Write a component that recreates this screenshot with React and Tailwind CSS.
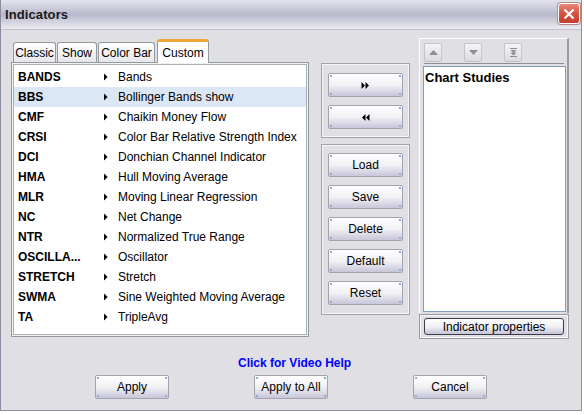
import React from 'react';

const rows = [
  ['BANDS', 'Bands'],
  ['BBS', 'Bollinger Bands show'],
  ['CMF', 'Chaikin Money Flow'],
  ['CRSI', 'Color Bar Relative Strength Index'],
  ['DCI', 'Donchian Channel Indicator'],
  ['HMA', 'Hull Moving Average'],
  ['MLR', 'Moving Linear Regression'],
  ['NC', 'Net Change'],
  ['NTR', 'Normalized True Range'],
  ['OSCILLA...', 'Oscillator'],
  ['STRETCH', 'Stretch'],
  ['SWMA', 'Sine Weighted Moving Average'],
  ['TA', 'TripleAvg'],
];

const font = { fontFamily: '"Liberation Sans", Arial, sans-serif' };

function XpButton({ children, className = '' }) {
  return (
    <div className={`relative flex items-center justify-center border border-[#a3a3ad] rounded-[2px] bg-gradient-to-b from-white via-[#f1f1f5] to-[#c8c6d9] text-[12px] text-black ${className}`}>
      <span className="absolute left-px top-px w-[2px] h-[2px] bg-[#8cb0d8]" />
      <span className="absolute right-px top-px w-[2px] h-[2px] bg-[#8cb0d8]" />
      <span className="absolute left-px bottom-px w-[2px] h-[2px] bg-[#8cb0d8]" />
      <span className="absolute right-px bottom-px w-[2px] h-[2px] bg-[#8cb0d8]" />
      {children}
    </div>
  );
}

function Tri() {
  return (
    <svg width="6" height="8" viewBox="0 0 6 8" className="shrink-0">
      <path d="M1.5 1 L5 4 L1.5 7 Z" fill="#c8c8c8" />
      <path d="M1 0.5 L4.5 4 L1 7.5 Z" fill="#000" />
    </svg>
  );
}

function Tab({ label, active }) {
  if (active) {
    return (
      <div className="relative z-10 -mb-px h-[24px] w-[52px] flex items-center justify-center rounded-t-[3px] border-x border-[#919b9c] border-t-[3px] border-t-[#f0a637] bg-white text-[12px] text-black">
        {label}
      </div>
    );
  }
  return (
    <div className="h-[20px] flex items-center justify-center rounded-t-[3px] border border-b-0 border-[#919b9c] bg-gradient-to-b from-white to-[#e6e6ec] text-[12px] text-black">
      {label}
    </div>
  );
}

function SmallBtn({ children }) {
  return (
    <div className="w-[18px] h-[19px] flex items-center justify-center rounded-[2px] border border-[#c4c3c8] bg-gradient-to-b from-[#f4f4f4] to-[#dcdbe0]">
      {children}
    </div>
  );
}

export default function App() {
  return (
    <div className="w-[584px] h-[415px] bg-white" style={font}>
      <div className="w-[582px] h-[411px] flex flex-col border-x border-b border-[#8d8ca0] bg-[#e0dfe3]">
        {/* title bar */}
        <div className="h-[30px] shrink-0 flex items-center justify-between pl-[4px] pr-px bg-gradient-to-b from-[#e4e4ec] via-[#b9b9cc] to-[#ecebf2] border-b border-[#c2c1cc]">
          <span className="text-[13px] font-bold text-[#1a1a1a] tracking-[0.1px]">Indicators</span>
          <div className="w-[22px] h-[21px] mb-[2px] flex items-center justify-center rounded-[3px] border border-white bg-gradient-to-b from-[#e88a7c] via-[#d4513f] to-[#c2402e] shadow-[0_0_0_1px_#b88]">
            <svg width="12" height="12" viewBox="0 0 12 12">
              <path d="M1.5 1.5 L10.5 10.5 M10.5 1.5 L1.5 10.5" stroke="#fff" strokeWidth="2.2" />
            </svg>
          </div>
        </div>

        {/* main row */}
        <div className="flex pt-[8px] pl-[10px]">
          {/* left column */}
          <div className="w-[298px] mt-px flex flex-col">
            <div className="h-[23px] flex items-end gap-px pl-[2px]">
              <div className="w-[43px]"><Tab label="Classic" /></div>
              <div className="w-[40px]"><Tab label="Show" /></div>
              <div className="w-[57px] mr-px"><Tab label="Color Bar" /></div>
              <Tab label="Custom" active />
            </div>
            <div className="h-[275px] border border-[#919b9c] bg-[#f2f2f2] p-px">
              <div className="h-full border border-[#aab0b8] bg-white pt-[2px]">
                {rows.map(([code, name], i) => (
                  <div key={code} className={`h-[20px] flex items-center pl-[4px] ${i === 1 ? 'bg-[#dce7f5]' : ''}`}>
                    <span className="w-[85px] shrink-0 text-[12px] font-bold text-black">{code}</span>
                    <Tri />
                    <span className="ml-[9px] text-[12px] text-black">{name}</span>
                  </div>
                ))}
              </div>
            </div>
          </div>

          {/* middle column */}
          <div className="w-[89px] ml-[12px] mt-[25px] flex flex-col gap-[6px]">
            <div className="h-[75px] border border-[#a3a2a8] shadow-[inset_0_0_0_1px_#f6f6f8] flex flex-col gap-[8px] px-[6px] pt-[9px]">
              <XpButton className="h-[24px]">
                <svg width="9" height="7" viewBox="0 0 9 7">
                  <path d="M0.5 0 L4 3.5 L0.5 7 Z M4.5 0 L8 3.5 L4.5 7 Z" fill="#000" />
                </svg>
              </XpButton>
              <XpButton className="h-[24px]">
                <svg width="9" height="7" viewBox="0 0 9 7">
                  <path d="M4.5 0 L1 3.5 L4.5 7 Z M8.5 0 L5 3.5 L8.5 7 Z" fill="#000" />
                </svg>
              </XpButton>
            </div>
            <div className="h-[171px] border border-[#a3a2a8] shadow-[inset_0_0_0_1px_#f6f6f8] flex flex-col gap-[8px] px-[6px] pt-[8px]">
              {['Load', 'Save', 'Delete', 'Default', 'Reset'].map((t) => (
                <XpButton key={t} className="h-[24px]">{t}</XpButton>
              ))}
            </div>
          </div>

          {/* right column */}
          <div className="w-[150px] ml-[9px] flex flex-col">
            <div className="h-[275px] border-t border-l border-white border-r-2 border-r-[#9a99a0] pl-[4px] pr-px pt-[4px] flex flex-col">
              <div className="flex gap-[22px]">
                <SmallBtn>
                  <svg width="9" height="5" viewBox="0 0 9 5"><path d="M0 5 L4.5 0 L9 5 Z" fill="#8d8d93" /></svg>
                </SmallBtn>
                <SmallBtn>
                  <svg width="9" height="5" viewBox="0 0 9 5"><path d="M0 0 L4.5 5 L9 0 Z" fill="#8d8d93" /></svg>
                </SmallBtn>
                <SmallBtn>
                  <svg width="7" height="9" viewBox="0 0 7 9">
                    <path d="M0 0.5 H7 M0 8.5 H7" stroke="#8d8d93" strokeWidth="1" />
                    <path d="M0.5 2 L3.5 5 L6.5 2 Z M0.5 4.5 L3.5 7.5 L6.5 4.5 Z" fill="#8d8d93" />
                  </svg>
                </SmallBtn>
              </div>
              <div className="mt-px h-px bg-[#8f8e96] mr-[2px]" />
              <div className="mt-[2px] h-[246px] -ml-px border border-[#7f9db9] bg-white px-px pt-[3px]">
                <div className="text-[13px] leading-[15px] font-bold text-black">Chart Studies</div>
              </div>
            </div>
            <div className="mt-[1px] h-[25px] border border-[#9a99a0] shadow-[inset_0_0_0_1px_#f8f8fa] px-[4px] pt-[3px]">
              <div className="h-[17px] flex items-center justify-center rounded-[3px] border border-[#3c3c4a] bg-gradient-to-b from-white via-[#f0f0f4] to-[#c6c4d6] text-[12px] text-black">
                Indicator properties
              </div>
            </div>
          </div>
        </div>

        {/* help link */}
        <div className="mt-[17px] h-[14px] pl-[237px] flex items-center">
          <span className="text-[12px] font-bold text-[#0000ff]">Click for Video Help</span>
        </div>

        {/* bottom buttons */}
        <div className="mt-[5px] flex pl-[94px]">
          <XpButton className="w-[74px] h-[24px]">Apply</XpButton>
          <XpButton className="w-[74px] h-[24px] ml-[85px]">Apply to All</XpButton>
          <XpButton className="w-[74px] h-[24px] ml-[85px]">Cancel</XpButton>
        </div>
      </div>
    </div>
  );
}
